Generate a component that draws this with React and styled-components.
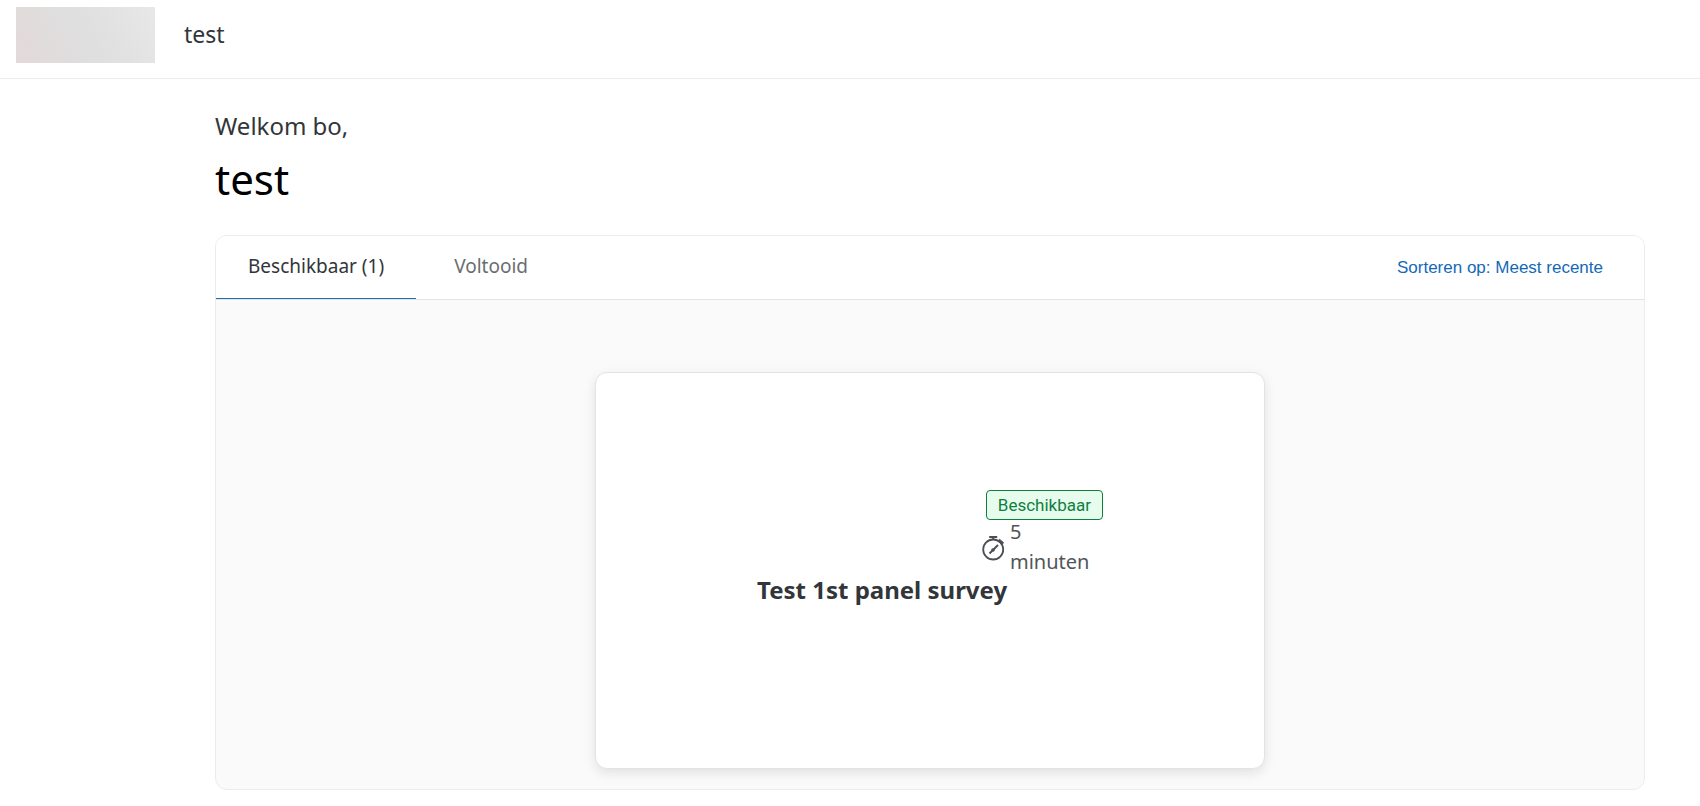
import React from "react";
import styled, { createGlobalStyle } from "styled-components";

const GlobalStyle = createGlobalStyle`
  * {
    box-sizing: border-box;
  }
  body {
    margin: 0;
    background: #fff;
    color: #32363a;
    font-family: "Noto Sans", "Open Sans", sans-serif;
  }
  h1, h2, p {
    margin: 0;
    font-weight: 400;
  }
`;

const Header = styled.header`
  display: flex;
  align-items: flex-start;
  gap: 29px;
  height: 79px;
  padding: 7px 16px 0;
  border-bottom: 1px solid #ececec;
`;

const Logo = styled.div`
  width: 139px;
  height: 56px;
  background: linear-gradient(60deg, #e4d9d9 0%, #dfdddd 35%, #e1e1e1 65%, #e8e8e8 100%);
`;

const BrandName = styled.p`
  font-size: 23px;
  line-height: 54px;
`;

const Main = styled.main`
  padding: 31px 55px 15px 215px;
`;

const Welcome = styled.p`
  font-size: 24px;
  line-height: 32px;
`;

const PageTitle = styled.h1`
  margin-top: 12px;
  color: #000;
  font-size: 42px;
  line-height: 50px;
`;

const Panel = styled.section`
  margin-top: 31px;
  border: 1px solid #ececec;
  border-radius: 12px;
  background: #fafafa;
  overflow: hidden;
`;

const TabBar = styled.div`
  display: flex;
  align-items: stretch;
  height: 64px;
  background: #fff;
  border-bottom: 1px solid #e4e4e4;
`;

const Tab = styled.button`
  min-width: ${(props) => (props.$active ? "200px" : "0")};
  padding: 0 32px 3px;
  border: none;
  border-bottom: 1px solid ${(props) => (props.$active ? "#1f6fa8" : "transparent")};
  margin-right: 6px;
  background: none;
  color: ${(props) => (props.$active ? "#32363a" : "#6a6d70")};
  font-family: inherit;
  font-size: 19px;
  text-align: left;
`;

const SortButton = styled.button`
  margin-left: auto;
  padding: 0 41px 0 0;
  border: none;
  background: none;
  color: #1369b8;
  font-family: "Liberation Sans", Arial, sans-serif;
  font-size: 17px;
`;

const PanelBody = styled.div`
  display: flex;
  justify-content: center;
  padding: 72px 20px 20px;
`;

const Card = styled.article`
  display: flex;
  flex-direction: column;
  align-items: center;
  width: 100%;
  max-width: 670px;
  min-height: 397px;
  padding-top: 117px;
  border: 1px solid #e3e3e3;
  border-radius: 12px;
  background: #fff;
  box-shadow: 0 4px 12px rgba(0, 0, 0, 0.1);
`;

const CardContent = styled.div`
  display: flex;
  flex-direction: column;
  width: 346px;
`;

const Meta = styled.div`
  align-self: flex-end;
  display: flex;
  flex-direction: column;
  align-items: flex-end;
  width: 121px;
`;

const Badge = styled.span`
  padding: 0 11px;
  border: 1px solid #107e3e;
  border-radius: 4px;
  background: #e6fdee;
  color: #107e3e;
  font-family: Roboto, sans-serif;
  font-size: 17px;
  line-height: 28px;
`;

const Duration = styled.div`
  display: flex;
  align-items: center;
  gap: 5px;
  width: 100%;
  margin-top: -3px;
  color: #515559;
  font-size: 20px;
  line-height: 30px;

  svg {
    flex: none;
  }
`;

const SurveyTitle = styled.h2`
  font-size: 24px;
  font-weight: 700;
  line-height: 26px;
  white-space: nowrap;
`;

function StopwatchIcon() {
  return (
    <svg width="23" height="28" viewBox="0 0 23 28" fill="none" stroke="#4c5054" aria-hidden="true">
      <circle cx="11.2" cy="16.5" r="10" strokeWidth="1.8" />
      <path d="M7.2 4h8M11.2 4v3" strokeWidth="2" />
      <path d="M17.5 6.2l4 3.3-1.3 2.4-4-3.6z" fill="#4c5054" strokeWidth="0.8" />
      <path d="M7.5 20.5l8.5-8.5" strokeWidth="2" />
      <circle cx="11" cy="17" r="1.8" fill="#4c5054" stroke="none" />
    </svg>
  );
}

function App() {
  return (
    <>
      <GlobalStyle />
      <Header>
        <Logo />
        <BrandName>test</BrandName>
      </Header>
      <Main>
        <Welcome>Welkom bo,</Welcome>
        <PageTitle>test</PageTitle>
        <Panel>
          <TabBar>
            <Tab type="button" $active>
              Beschikbaar (1)
            </Tab>
            <Tab type="button">Voltooid</Tab>
            <SortButton type="button">Sorteren op: Meest recente</SortButton>
          </TabBar>
          <PanelBody>
            <Card>
              <CardContent>
                <Meta>
                  <Badge>Beschikbaar</Badge>
                  <Duration>
                    <StopwatchIcon />
                    <span>
                      5<br />
                      minuten
                    </span>
                  </Duration>
                </Meta>
                <SurveyTitle>Test 1st panel survey</SurveyTitle>
              </CardContent>
            </Card>
          </PanelBody>
        </Panel>
      </Main>
    </>
  );
}

export default App;
